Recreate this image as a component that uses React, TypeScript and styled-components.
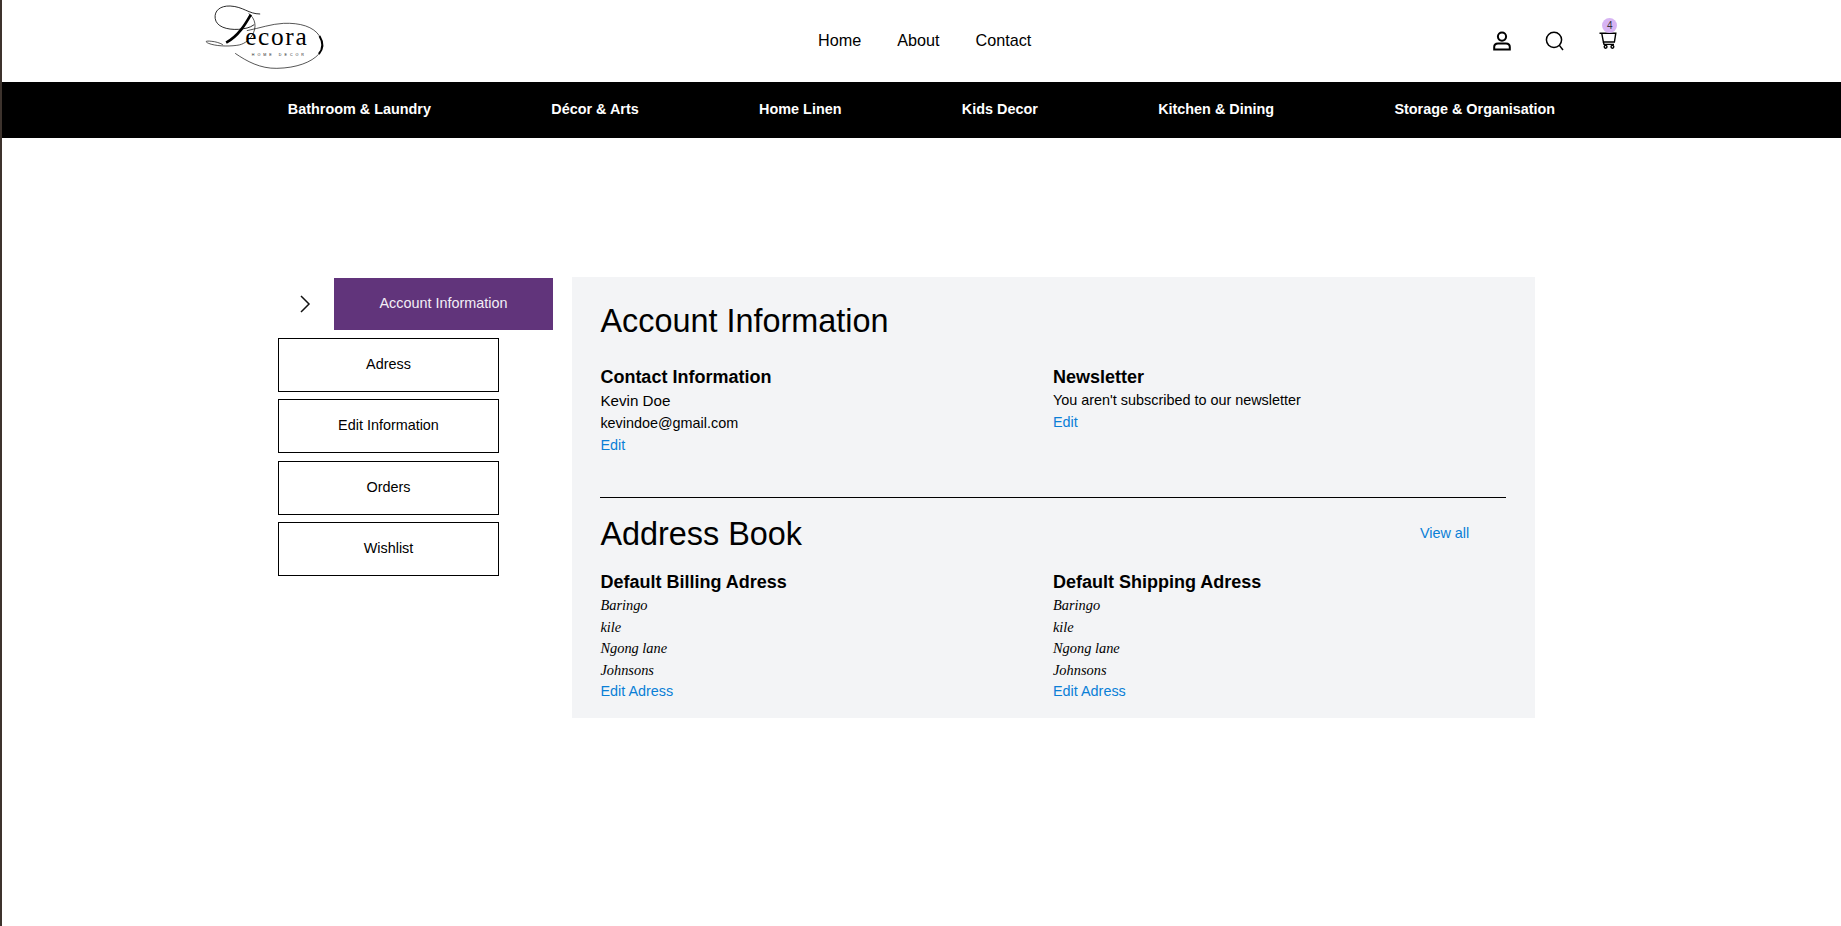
import styled, { createGlobalStyle } from "styled-components"

const categories = [
  "Bathroom & Laundry",
  "Décor & Arts",
  "Home Linen",
  "Kids Decor",
  "Kitchen & Dining",
  "Storage & Organisation",
]
const sideLinks = ["Adress", "Edit Information", "Orders", "Wishlist"]
const addressLines = ["Baringo", "kile", "Ngong lane", "Johnsons"]

function Logo() {
  return (
    <svg width="127" height="72" viewBox="60 15 380 216" fill="none" stroke="#000">
      <path d="M240 42C205 42 190 20 150 18C120 17 102 32 105 55C108 80 140 90 175 88C195 86 208 84 222 74" strokeWidth="2.5" />
      <path d="M212 44C196 72 175 108 138 128" strokeWidth="8" />
      <path d="M205 40C225 55 232 80 215 108C205 122 190 134 170 136C140 140 105 138 85 130C72 124 78 122 95 124C105 125 118 128 128 134" strokeWidth="2" />
      <path d="M200 92C240 84 272 72 310 70C360 68 400 80 418 108" strokeWidth="2" />
      <path d="M418 108C430 128 428 148 416 162" strokeWidth="6" />
      <path d="M416 162C395 186 350 204 290 205C240 206 200 184 165 160" strokeWidth="2" />
      <LogoWord x="195" y="135">ecora</LogoWord>
      <LogoTag x="215" y="167">HOME DECOR</LogoTag>
    </svg>
  )
}

function UserIcon() {
  return (
    <svg width="20" height="20" viewBox="0 0 20 20" fill="none" stroke="#000" strokeWidth="2">
      <circle cx="10" cy="5.6" r="4.1" />
      <path d="M2.2 18.6V16C2.2 13.6 4 12.4 6 12.4H14C16 12.4 17.8 13.6 17.8 16V18.6Z" />
    </svg>
  )
}

function SearchIcon() {
  return (
    <svg width="20" height="20" viewBox="0 0 20 20" fill="none" stroke="#000" strokeWidth="1.5">
      <circle cx="9" cy="8.8" r="7.6" />
      <path d="M14.4 14.4L18 19" />
    </svg>
  )
}

function CartIcon() {
  return (
    <svg width="18" height="18" viewBox="0 0 18 18" fill="none" stroke="#000" strokeWidth="1.4">
      <path d="M0.5 1.2H16.8L15.4 10H4.4L2.7 1.2" />
      <path d="M4.4 10L5 12.4H15" />
      <circle cx="6.6" cy="14.8" r="1.4" />
      <circle cx="13.4" cy="14.8" r="1.4" />
    </svg>
  )
}

function Chevron() {
  return (
    <svg width="12" height="18" viewBox="0 0 12 18" fill="none" stroke="#111" strokeWidth="1.5">
      <path d="M2 1L10 9L2 17" />
    </svg>
  )
}

function App() {
  return (
    <Page>
      <GlobalStyles />
      <Header>
        <LogoSlot>
          <Logo />
        </LogoSlot>
        <TopNav>
          <TopLink>Home</TopLink>
          <TopLink>About</TopLink>
          <TopLink>Contact</TopLink>
        </TopNav>
        <Icons>
          <UserIcon />
          <SearchIcon />
          <CartWrap>
            <CartIcon />
            <Badge>4</Badge>
          </CartWrap>
        </Icons>
      </Header>
      <CategoryBar>
        {categories.map((c) => (
          <Category key={c}>{c}</Category>
        ))}
      </CategoryBar>
      <Main>
        <Sidebar>
          <ActiveRow>
            <ChevronSlot>
              <Chevron />
            </ChevronSlot>
            <ActiveLink>Account Information</ActiveLink>
          </ActiveRow>
          {sideLinks.map((l) => (
            <SideLink key={l}>{l}</SideLink>
          ))}
        </Sidebar>
        <Panel>
          <Title>Account Information</Title>
          <Columns>
            <div>
              <SubTitle>Contact Information</SubTitle>
              <NameLine>Kevin Doe</NameLine>
              <Line>kevindoe@gmail.com</Line>
              <BlueLink>Edit</BlueLink>
            </div>
            <div>
              <SubTitle>Newsletter</SubTitle>
              <NoticeLine>You aren't subscribed to our newsletter</NoticeLine>
              <BlueLink>Edit</BlueLink>
            </div>
          </Columns>
          <Divider />
          <BookHead>
            <Title>Address Book</Title>
            <ViewAll>View all</ViewAll>
          </BookHead>
          <BookColumns>
            {["Default Billing Adress", "Default Shipping Adress"].map((t) => (
              <div key={t}>
                <SubTitle>{t}</SubTitle>
                <AddressList>
                  {addressLines.map((a) => (
                    <AddressLine key={a}>{a}</AddressLine>
                  ))}
                </AddressList>
                <BlueLink>Edit Adress</BlueLink>
              </div>
            ))}
          </BookColumns>
        </Panel>
      </Main>
    </Page>
  )
}

const LogoWord = styled.text`
  font-family: "Liberation Serif", serif;
  font-size: 76px;
  letter-spacing: 5px;
  fill: #000;
  stroke: none;
`

const LogoTag = styled.text`
  font-family: "Liberation Sans", sans-serif;
  font-size: 11px;
  letter-spacing: 9px;
  fill: #222;
  stroke: none;
`

const Page = styled.div`
  min-height: 926px;
  border-left: 2px solid #3d332d;
  background: #fff;
`

const Header = styled.header`
  height: 82px;
  display: flex;
  align-items: center;
  padding-left: 198px;
`

const LogoSlot = styled.div`
  width: 127px;
  height: 72px;
`

const TopNav = styled.nav`
  display: flex;
  gap: 36px;
  margin-left: 491px;
  margin-top: -1px;
`

const TopLink = styled.a`
  font-size: 16.2px;
  color: #000;
`

const Icons = styled.div`
  display: flex;
  align-items: center;
  gap: 33px;
  margin-left: 461px;
`

const CartWrap = styled.div`
  position: relative;
  width: 18px;
  height: 18px;
  margin-left: 1px;
`

const Badge = styled.span`
  position: absolute;
  top: -14px;
  left: 3px;
  width: 15px;
  height: 15px;
  border-radius: 50%;
  background: #d7b4f3;
  color: #333;
  font-size: 10px;
  line-height: 15px;
  text-align: center;
`

const CategoryBar = styled.nav`
  height: 56px;
  background: #000;
  display: flex;
  align-items: center;
  justify-content: center;
  gap: 120.35px;
  padding-bottom: 2px;
`

const Category = styled.a`
  color: #fff;
  font-size: 14.4px;
  font-weight: 700;
`

const Main = styled.main`
  display: flex;
  align-items: flex-start;
  padding: 139px 0 0 276px;
`

const Sidebar = styled.aside`
  width: 294px;
  padding-top: 1px;
  display: flex;
  flex-direction: column;
  align-items: flex-start;
  gap: 7.2px;
`

const ActiveRow = styled.div`
  display: flex;
  align-items: center;
  margin-bottom: 1px;
`

const ChevronSlot = styled.div`
  width: 56px;
  display: flex;
  justify-content: center;
  padding-right: 2px;
`

const ActiveLink = styled.a`
  width: 219px;
  height: 52px;
  padding-bottom: 2px;
  background: #61347b;
  color: #f3eef6;
  font-size: 14.4px;
  display: flex;
  align-items: center;
  justify-content: center;
`

const SideLink = styled.a`
  width: 221px;
  height: 54px;
  padding-bottom: 2px;
  border: 1px solid #000;
  color: #000;
  font-size: 14.4px;
  display: flex;
  align-items: center;
  justify-content: center;
`

const Panel = styled.section`
  width: 963px;
  height: 441px;
  background: #f3f4f6;
  padding: 26px 28.8px 0 28.4px;
`

const Title = styled.h2`
  margin: 0;
  font-size: 32.4px;
  font-weight: 400;
  line-height: 37px;
  color: #000;
`

const Columns = styled.div`
  display: grid;
  grid-template-columns: 452.6px 1fr;
  margin-top: 27px;
  height: 130px;
`

const SubTitle = styled.h3`
  margin: 0;
  font-size: 18px;
  font-weight: 700;
  line-height: 21px;
  color: #000;
`

const NameLine = styled.p`
  margin: 2px 0 0;
  font-size: 15.2px;
  line-height: 22px;
  color: #000;
`

const Line = styled.p`
  margin: 0;
  font-size: 14.4px;
  line-height: 22px;
  color: #000;
`

const NoticeLine = styled(Line)`
  margin: 1px 0 0;
`

const BlueLink = styled.a`
  display: block;
  margin-top: 1px;
  font-size: 14.4px;
  line-height: 21px;
  color: #0a7fd6;
`

const Divider = styled.hr`
  margin: 0;
  border: 0;
  border-top: 1px solid #000;
`

const BookHead = styled.div`
  display: flex;
  justify-content: space-between;
  align-items: center;
  margin-top: 18px;
  padding-right: 37px;
`

const ViewAll = styled.a`
  margin-bottom: 3px;
  font-size: 14.4px;
  color: #0a7fd6;
`

const BookColumns = styled.div`
  display: grid;
  grid-template-columns: 452.6px 1fr;
  margin-top: 19px;
`

const AddressList = styled.div`
  margin: 2px 0 -2px;
`

const AddressLine = styled.p`
  margin: 0;
  font-family: "Liberation Serif", serif;
  font-style: italic;
  font-size: 14.4px;
  line-height: 21.7px;
  color: #000;
`

const GlobalStyles = createGlobalStyle`
  * {
    box-sizing: border-box;
  }
  body {
    margin: 0;
    background: #fff;
    font-family: "Liberation Sans", Arial, sans-serif;
  }
`

export default App
